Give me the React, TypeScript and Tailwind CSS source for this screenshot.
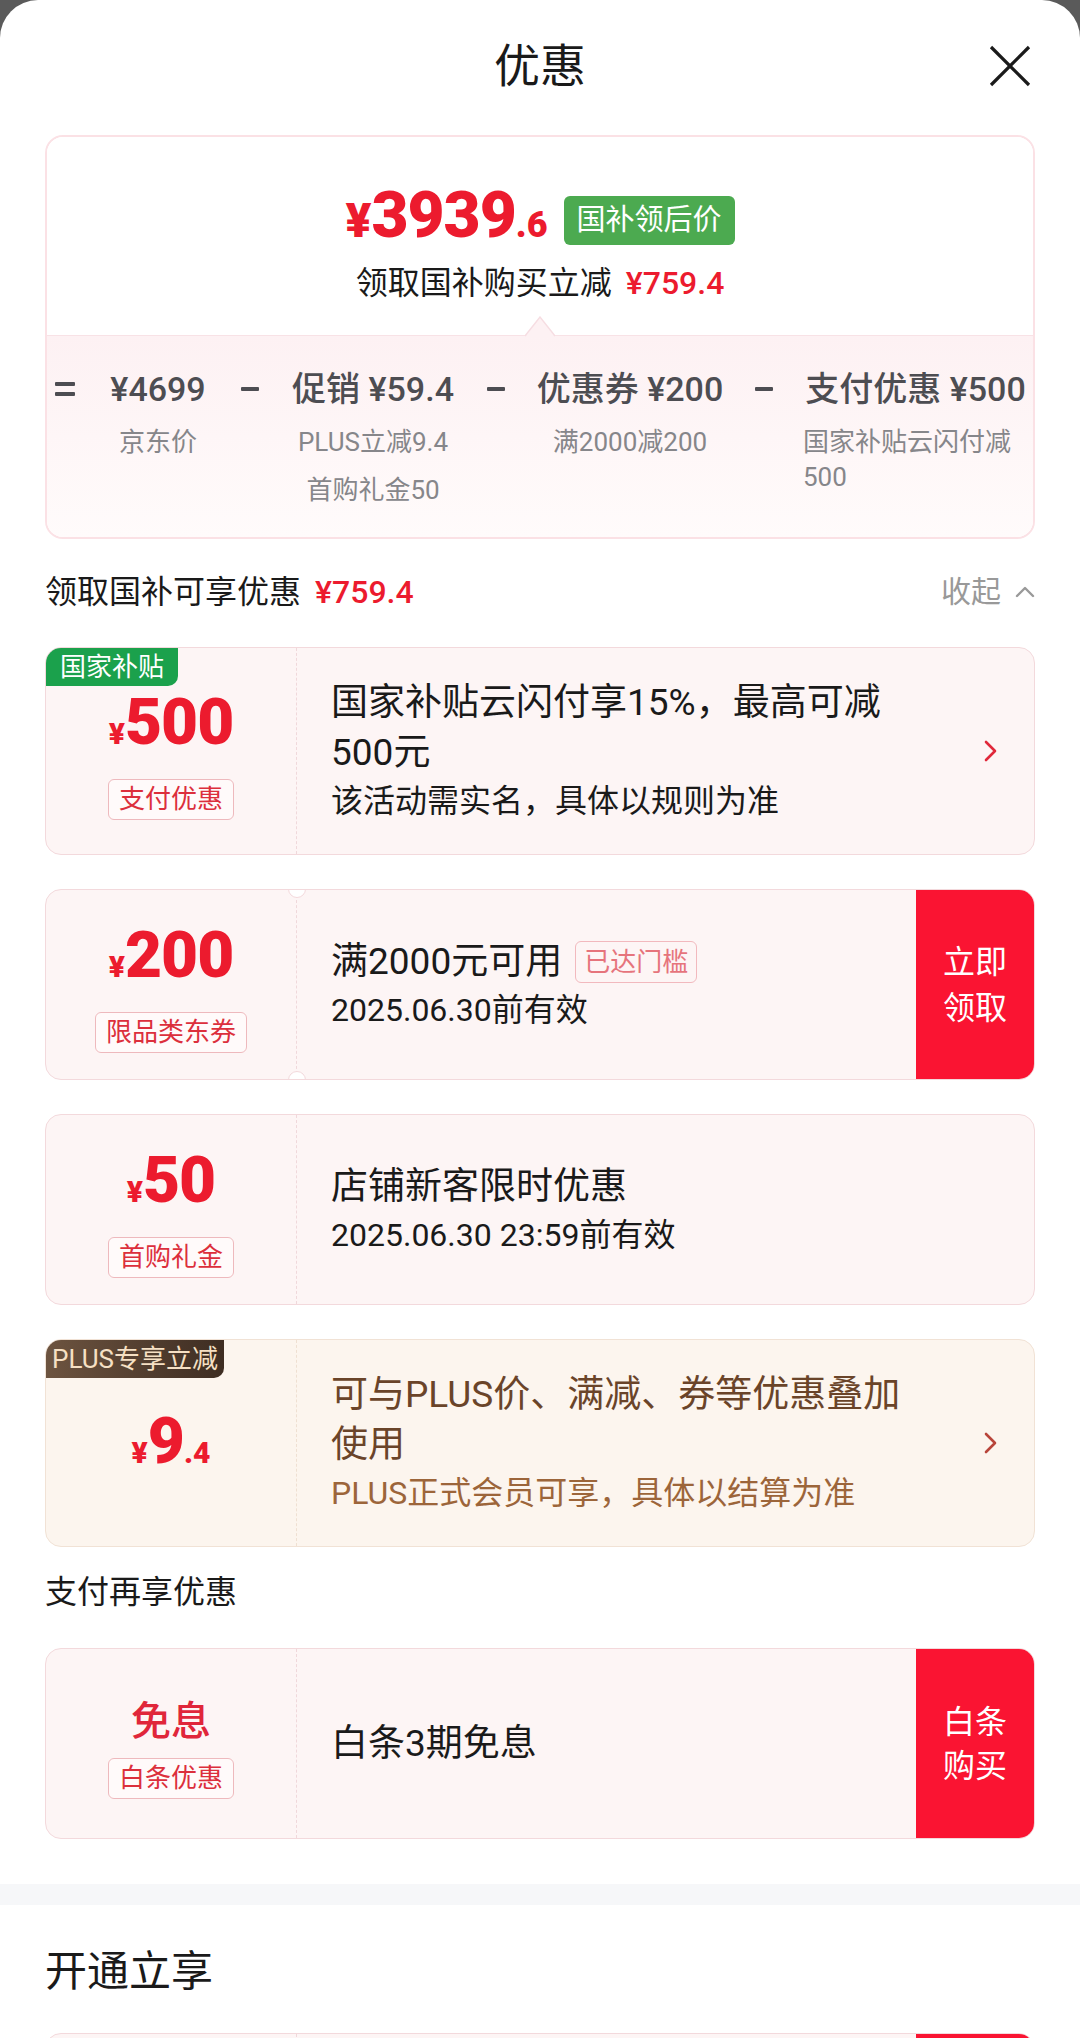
import React from "react";

const Chevron = ({ color }: { color: string }) => (
  <svg width="14" height="22" viewBox="0 0 14 22" fill="none">
    <polyline points="2,2 11,11 2,20" stroke={color} strokeWidth="2.6" strokeLinecap="round" strokeLinejoin="round" />
  </svg>
);

const Bar = ({ className }: { className: string }) => <div className={"h-[4px] rounded-[1px] bg-[#4d4d52] " + className} />;

// one column of the price breakdown row
const Col = ({ width, title, children }: { width: string; title: string; children?: React.ReactNode }) => (
  <div className={"flex shrink-0 flex-col items-center " + width}>
    <div className="whitespace-nowrap text-[34px] font-medium leading-[44px] text-[#4d4d52]">{title}</div>
    <div className="mt-[14px] flex flex-col items-center text-[26px] leading-[35px] text-[#86868a]">{children}</div>
  </div>
);

const Tag = ({ text, className }: { text: string; className?: string }) => (
  <span
    className={
      "h-[41px] whitespace-nowrap rounded-[6px] border border-[#eeb9bd] bg-[#fffafa] px-[10px] text-[26px] leading-[39px] text-[#dc2f3c] " +
      (className ?? "")
    }
  >
    {text}
  </span>
);

const Price = ({ big, small }: { big: string; small?: string }) => (
  <div className="flex items-baseline font-black leading-[64px] text-[#ec1b2e]">
    <span className="text-[30px]">¥</span>
    <span className="text-[64px] tracking-[-1px]">{big}</span>
    {small && <span className="text-[30px]">{small}</span>}
  </div>
);

export default function App() {
  return (
    <div className="min-h-[2038px] bg-[#5a5a5a] font-['Roboto','Noto_Sans_CJK_SC',sans-serif]">
      <div className="min-h-[2038px] rounded-t-[38px] bg-white pb-[40px]">
        {/* title bar */}
        <div className="grid h-[135px] grid-cols-[1fr_auto_1fr] items-start px-[49px] pt-[36px]">
          <div />
          <div className="text-[46px] leading-[60px] text-[#1a1a1a]">优惠</div>
          <button className="mt-[9px] justify-self-end">
            <svg width="42" height="42" viewBox="0 0 42 42">
              <line x1="2" y1="2" x2="40" y2="40" stroke="#1a1a1a" strokeWidth="3.2" />
              <line x1="40" y1="2" x2="2" y2="40" stroke="#1a1a1a" strokeWidth="3.2" />
            </svg>
          </button>
        </div>

        {/* summary */}
        <div className="mx-[45px] overflow-hidden rounded-[18px] border-2 border-[#fbe1e5]">
          <div className="flex h-[198px] flex-col items-center bg-white pt-[47px]">
            <div className="flex items-center">
              <div className="flex items-baseline font-black leading-[64px] text-[#ec1b2e]">
                <span className="text-[48px]">¥</span>
                <span className="text-[64px] tracking-[-1px]">3939</span>
                <span className="text-[36px]">.6</span>
              </div>
              <span className="ml-[16px] h-[49px] rounded-[6px] bg-[#4caa50] px-[13px] text-[29px] leading-[49px] text-white">
                国补领后价
              </span>
            </div>
            <div className="mt-[6px] text-[32px] leading-[40px] text-[#1a1a1a]">
              领取国补购买立减<span className="ml-[14px] font-medium text-[#ec1b2e]">¥759.4</span>
            </div>
          </div>
          <div className="relative h-[202px] border-t border-[#f8e2e6] bg-linear-to-b from-[#fdf1f3] to-[#fffbfb]">
            <svg className="absolute -top-[20px] left-1/2 -translate-x-1/2" width="30" height="21" viewBox="0 0 30 21">
              <polygon points="0,21 15,1 30,21" fill="#fdf1f3" />
              <polyline points="0,20 15,1 30,20" fill="none" stroke="#f6dde2" strokeWidth="1.4" />
            </svg>
            <div className="flex items-start gap-[30px] pl-[8px] pt-[31px]">
              <div className="flex w-[20px] shrink-0 flex-col gap-[6px] pt-[15px]">
                <Bar className="w-[20px]" />
                <Bar className="w-[20px]" />
              </div>
              <Col width="w-[106px]" title="¥4699">
                <span>京东价</span>
              </Col>
              <div className="shrink-0 pt-[20px]">
                <Bar className="w-[18px]" />
              </div>
              <Col width="w-[168px]" title="促销 ¥59.4">
                <span className="whitespace-nowrap">PLUS立减9.4</span>
                <span className="mt-[13px] whitespace-nowrap">首购礼金50</span>
              </Col>
              <div className="shrink-0 pt-[20px]">
                <Bar className="w-[18px]" />
              </div>
              <Col width="w-[190px]" title="优惠券 ¥200">
                <span className="whitespace-nowrap">满2000减200</span>
              </Col>
              <div className="shrink-0 pt-[20px]">
                <Bar className="w-[18px]" />
              </div>
              <Col width="w-[225px]" title="支付优惠 ¥500">
                <span className="w-[225px] text-left">
                  国家补贴云闪付减
                  <br />
                  500
                </span>
              </Col>
            </div>
          </div>
        </div>

        {/* section header */}
        <div className="mt-[33px] flex items-center justify-between px-[45px] leading-[40px]">
          <div className="text-[32px] text-[#1a1a1a]">
            领取国补可享优惠<span className="ml-[14px] font-medium text-[#ec1b2e]">¥759.4</span>
          </div>
          <div className="flex items-center text-[30px] text-[#999999]">
            收起
            <svg className="ml-[14px]" width="20" height="12" viewBox="0 0 20 12" fill="none">
              <polyline points="2,10 10,2 18,10" stroke="#999999" strokeWidth="2.4" strokeLinecap="round" strokeLinejoin="round" />
            </svg>
          </div>
        </div>

        {/* card 1 */}
        <div className="relative mx-[45px] mt-[35px] flex h-[208px] overflow-hidden rounded-[16px] border border-[#f3d9dc] bg-[#fdf5f5]">
          <span className="absolute left-0 top-0 h-[38px] rounded-br-[10px] bg-[#1ba14c] px-[14px] text-[26px] leading-[38px] text-white">
            国家补贴
          </span>
          <div className="flex w-[251px] shrink-0 flex-col items-center justify-center border-r border-dashed border-[#f0d8db] pt-[8px]">
            <Price big="500" />
            <Tag text="支付优惠" className="mt-[13px]" />
          </div>
          <div className="flex flex-1 items-center pl-[34px] pr-[36px]">
            <div className="flex-1 text-[#1a1a1a]">
              <div className="text-[37px] leading-[50px]">
                国家补贴云闪付享15%，最高可减
                <br />
                500元
              </div>
              <div className="text-[32px] leading-[46px]">该活动需实名，具体以规则为准</div>
            </div>
            <Chevron color="#e0283a" />
          </div>
        </div>

        {/* card 2 */}
        <div className="relative mx-[45px] mt-[34px] flex h-[191px] overflow-hidden rounded-[16px] border border-[#f3d9dc] bg-[#fdf5f5]">
          <span className="absolute -top-[10px] left-[242px] h-[18px] w-[18px] rounded-full border border-[#f3d9dc] bg-white" />
          <span className="absolute -bottom-[10px] left-[242px] h-[18px] w-[18px] rounded-full border border-[#f3d9dc] bg-white" />
          <div className="flex w-[251px] shrink-0 flex-col items-center justify-center border-r border-dashed border-[#f0d8db] pt-[8px]">
            <Price big="200" />
            <Tag text="限品类东券" className="mt-[13px]" />
          </div>
          <div className="flex flex-1 flex-col justify-center pl-[34px] text-[#1a1a1a]">
            <div className="flex items-center">
              <span className="text-[37px] leading-[50px]">满2000元可用</span>
              <span className="ml-[13px] h-[42px] rounded-[6px] border border-[#f2b9be] px-[8px] text-[26px] leading-[40px] text-[#e6747c]">
                已达门槛
              </span>
            </div>
            <div className="text-[32px] leading-[46px]">2025.06.30前有效</div>
          </div>
          <div className="flex w-[118px] shrink-0 flex-col items-center justify-center bg-[#fa1432] text-[32px] leading-[46px] text-white">
            <span>立即</span>
            <span>领取</span>
          </div>
        </div>

        {/* card 3 */}
        <div className="mx-[45px] mt-[34px] flex h-[191px] overflow-hidden rounded-[16px] border border-[#f3d9dc] bg-[#fdf5f5]">
          <div className="flex w-[251px] shrink-0 flex-col items-center justify-center border-r border-dashed border-[#f0d8db] pt-[8px]">
            <Price big="50" />
            <Tag text="首购礼金" className="mt-[13px]" />
          </div>
          <div className="flex flex-1 flex-col justify-center pl-[34px] text-[#1a1a1a]">
            <div className="text-[37px] leading-[50px]">店铺新客限时优惠</div>
            <div className="text-[32px] leading-[46px]">2025.06.30 23:59前有效</div>
          </div>
        </div>

        {/* card 4: plus */}
        <div className="relative mx-[45px] mt-[34px] flex h-[208px] overflow-hidden rounded-[16px] border border-[#f1e2d5] bg-[#fcf5ee]">
          <span className="absolute left-0 top-0 h-[38px] rounded-br-[10px] bg-linear-to-r from-[#6d5440] to-[#3e2d22] px-[6px] text-[26px] leading-[38px] text-[#f6e0c4]">
            PLUS专享立减
          </span>
          <div className="flex w-[251px] shrink-0 flex-col items-center justify-center border-r border-dashed border-[#efe0d2] pt-[8px]">
            <Price big="9" small=".4" />
          </div>
          <div className="flex flex-1 items-center pl-[34px] pr-[36px]">
            <div className="flex-1">
              <div className="text-[37px] leading-[50px] text-[#6a4429]">
                可与PLUS价、满减、券等优惠叠加
                <br />
                使用
              </div>
              <div className="text-[32px] leading-[46px] text-[#9c653a]">PLUS正式会员可享，具体以结算为准</div>
            </div>
            <Chevron color="#b8453a" />
          </div>
        </div>

        <div className="mt-[25px] px-[45px] text-[32px] leading-[40px] text-[#1a1a1a]">支付再享优惠</div>

        {/* card 5 */}
        <div className="mx-[45px] mt-[36px] flex h-[191px] overflow-hidden rounded-[16px] border border-[#f3d9dc] bg-[#fdf5f5]">
          <div className="flex w-[251px] shrink-0 flex-col items-center justify-center border-r border-dashed border-[#f0d8db] pt-[8px]">
            <div className="text-[40px] font-medium leading-[52px] text-[#e0263a]">免息</div>
            <Tag text="白条优惠" className="mt-[10px]" />
          </div>
          <div className="flex flex-1 items-center pl-[34px] text-[37px] leading-[50px] text-[#1a1a1a]">白条3期免息</div>
          <div className="flex w-[118px] shrink-0 flex-col items-center justify-center bg-[#fa1432] text-[32px] leading-[44px] text-white">
            <span>白条</span>
            <span>购买</span>
          </div>
        </div>

        <div className="mt-[45px] h-[21px] bg-[#f6f7f9]" />

        <div className="mt-[39px] px-[45px] text-[42px] leading-[56px] text-[#1a1a1a]">开通立享</div>

        <div className="mx-[45px] mt-[33px] flex h-[191px] overflow-hidden rounded-[16px] border border-[#f3d9dc] bg-[#fdf5f5]">
          <div className="w-[251px] shrink-0 border-r border-dashed border-[#f0d8db]" />
          <div className="flex-1" />
          <div className="w-[118px] shrink-0 bg-[#fa1432]" />
        </div>
      </div>
    </div>
  );
}
